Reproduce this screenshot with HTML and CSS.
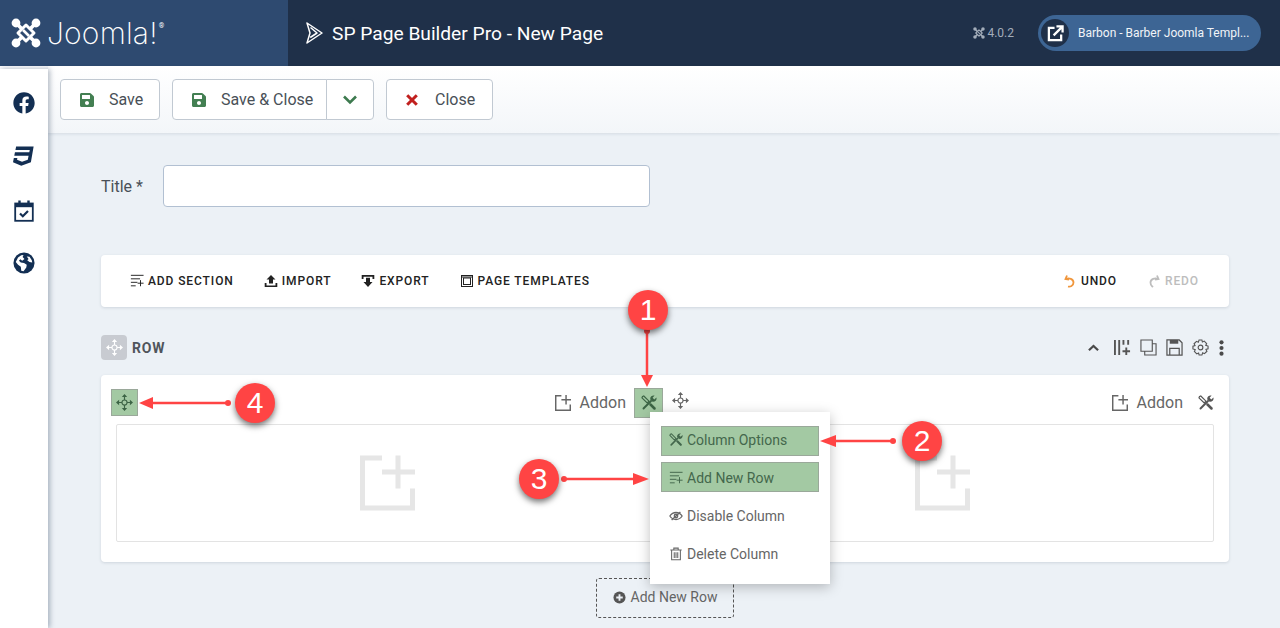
FILE: index.html
```html
<!DOCTYPE html>
<html lang="en">
<head>
<meta charset="utf-8">
<title>SP Page Builder Pro - New Page</title>
<link rel="stylesheet" href="styles.css">
</head>
<body>
<svg class="defs" width="0" height="0" aria-hidden="true">
  <symbol id="i-save" viewBox="0 0 448 512"><path fill="currentColor" d="M433.941 129.941l-83.882-83.882A48 48 0 0 0 316.118 32H48C21.49 32 0 53.49 0 80v352c0 26.51 21.49 48 48 48h352c26.51 0 48-21.49 48-48V163.882a48 48 0 0 0-14.059-33.941zM224 416c-35.346 0-64-28.654-64-64 0-35.346 28.654-64 64-64s64 28.654 64 64c0 35.346-28.654 64-64 64zm96-304.52V212c0 6.627-5.373 12-12 12H76c-6.627 0-12-5.373-12-12V108c0-6.627 5.373-12 12-12h228.52c3.183 0 6.235 1.264 8.485 3.515l3.48 3.48A11.996 11.996 0 0 1 320 111.48z"/></symbol>
  <symbol id="i-addon" viewBox="0 0 55 55"><path fill="none" stroke="currentColor" stroke-width="5" d="M22 2.500H2.500V52.500H52.500V33M38 0V33M22 16.500H55"/></symbol>
  <symbol id="i-tools" viewBox="0 0 16 16"><g fill="none" stroke="currentColor"><path stroke-width="1.900" stroke-linecap="round" d="M2.500 13.500 10 6"/><path stroke-width="1.200" d="M1.500 1.500 2.800 1 8 6.200 6.200 8 1 2.800Z"/><path stroke-width="2.500" stroke-linecap="round" d="M9.500 9.500 13.500 13.500"/></g><path fill="currentColor" d="M9.300 4.500A3.400 3.400 0 0 1 13.600 .6L11.600 2.700 13.300 4.400 15.400 2.400A3.400 3.400 0 0 1 11.500 6.700Z"/></symbol>
  <symbol id="i-move" viewBox="0 0 18 18"><g fill="none" stroke="currentColor" stroke-width="1.200"><circle cx="9" cy="9" r="2.700"/><path d="M9 1.500V6.300M9 11.700V16.500M1.500 9H6.300M11.700 9H16.500"/></g><path fill="currentColor" d="M9 0 11.800 3.300H6.200ZM9 18 11.800 14.700H6.200ZM0 9 3.300 6.200V11.800ZM18 9 14.700 6.200V11.800Z"/></symbol>
  <symbol id="i-rows" viewBox="0 0 16 16"><path fill="none" stroke="currentColor" stroke-width="1.100" d="M1 1.500H15.500M1 5.500H11.500M1 9.500H8.500M1 13.500H6.500M12 7V14M8.700 10.500H15.500"/></symbol>
  <symbol id="i-eye" viewBox="0 0 16 16"><g fill="none" stroke="currentColor"><path stroke-width="1.500" d="M1 8C3 5 5.500 4 8 4S13 5 15 8C13 11 10.500 12 8 12S3 11 1 8Z"/><circle cx="8" cy="8" r="2" stroke-width="1.500"/><path stroke-width="1.500" d="M3 12.500 13 3.500"/></g></symbol>
  <symbol id="i-trash" viewBox="0 0 16 16"><g fill="none" stroke="currentColor" stroke-width="1.200"><path d="M1.500 3.500H14.500M5.500 3.500V1.300H10.500V3.500M3 3.500V14.500H13V3.500M6 6V12.500M8 6V12.500M10 6V12.500"/></g></symbol>
  <symbol id="i-knot" viewBox="0 0 30 30"><g fill="none" stroke="currentColor" stroke-linejoin="round"><path stroke-width="3.600" d="M5 5 11 11M25 5 19 11M5 25 11 19M25 25 19 19"/><path stroke-width="3" d="M15 7 23 15 15 23 7 15Z"/><path stroke-width="2.600" d="M12 12 18 18"/></g><g fill="currentColor"><circle cx="5" cy="5" r="4.400"/><circle cx="25" cy="5" r="4.400"/><circle cx="5" cy="25" r="4.400"/><circle cx="25" cy="25" r="4.400"/></g></symbol>
</svg>

<div class="app">
  <header class="topbar">
    <div class="brand">
      <svg class="brand-knot"><use href="#i-knot"/></svg>
      <span class="brand-name">Joomla!</span><span class="brand-reg">®</span>
    </div>
    <div class="title-bar">
      <svg class="sp-logo" viewBox="0 0 20 24"><path fill="none" stroke="currentColor" stroke-width="1.500" stroke-linejoin="round" d="M3 2 18 12 3 22 6 12ZM6.500 6.500 13 12 6.200 16.500"/></svg>
      <h1 class="page-title">SP Page Builder Pro - New Page</h1>
    </div>
    <div class="version">
      <svg class="version-knot"><use href="#i-knot"/></svg>
      <span>4.0.2</span>
    </div>
    <a class="site-pill">
      <span class="site-icon">
        <svg viewBox="0 0 18 18"><path fill="none" stroke="currentColor" stroke-width="2.400" d="M8 3H2V16H15V10M7 11 16 2M10 1.500H16.500V8"/></svg>
      </span>
      <span class="site-name">Barbon - Barber Joomla Templ...</span>
    </a>
  </header>

  <div class="workspace">
    <aside class="sidebar">
      <svg class="side-icon" viewBox="0 0 512 512"><path fill="currentColor" d="M504 256C504 119 393 8 256 8S8 119 8 256c0 123.780 90.690 226.380 209.250 245V327.690h-63V256h63v-54.640c0-62.150 37-96.480 93.670-96.480 27.140 0 55.520 4.840 55.520 4.840v61h-31.280c-30.800 0-40.410 19.120-40.410 38.730V256h68.780l-11 71.690h-57.780V501C413.310 482.380 504 379.780 504 256z"/></svg>
      <svg class="side-icon" viewBox="0 0 512 512"><path fill="currentColor" d="M480 32l-64 368-223.300 80L0 400l19.600-94.800h82l-8 40.600L210 390.200l134.100-44.400 18.800-97.100H29.500l16-82h333.700l10.500-52.700H56.300l16.300-82H480z"/></svg>
      <svg class="side-icon" viewBox="0 0 20 22"><g fill="none" stroke="currentColor"><rect x="1.200" y="3.500" width="17.600" height="17.300" stroke-width="1.800"/><path stroke-width="3.400" d="M1 5.500H19"/><path stroke-width="2.400" d="M5.500 0.500V4M14.500 0.500V4"/><path stroke-width="2.200" d="M6 13.500 8.800 16.200 14 11"/></g></svg>
      <svg class="side-icon" viewBox="0 0 24 24"><circle cx="12" cy="12" r="11.500" fill="currentColor"/><path fill="#fff" d="M3 11 5.500 6 9 3.500 11.500 3.200 10.500 5.500 12.500 7.500 10 9.500 8 8 6.500 9.500 8.500 11.500 12 12 15 14 14.500 17 11.500 21 9 20.500 8.500 16 5.500 14ZM15 5 18 5.200 20.500 9 21 11.500 18 11 15.500 9 17 7.500Z"/></svg>
    </aside>

    <main class="main">
      <div class="toolbar">
        <button class="btn btn-save"><svg class="btn-icon save"><use href="#i-save"/></svg>Save</button>
        <div class="btn-group">
          <button class="btn btn-main"><svg class="btn-icon save"><use href="#i-save"/></svg>Save &amp; Close</button>
          <button class="btn btn-caret"><svg viewBox="0 0 14 10"><path fill="none" stroke="currentColor" stroke-width="2.600" d="M1 1.500 7 7.500 13 1.500"/></svg></button>
        </div>
        <button class="btn btn-close"><svg class="btn-x" viewBox="0 0 12 12"><path fill="none" stroke="currentColor" stroke-width="3" d="M1.200 1.200 10.800 10.800M10.800 1.200 1.200 10.800"/></svg>Close</button>
      </div>

      <div class="content">
        <div class="title-field">
          <label class="field-label" for="title">Title *</label>
          <input class="field-input" id="title" type="text">
        </div>

        <nav class="builder-bar">
          <a class="bar-item"><svg class="bar-icon"><use href="#i-rows"/></svg>ADD SECTION</a>
          <a class="bar-item"><svg class="bar-icon" viewBox="0 0 14 14"><path fill="currentColor" d="M7 1 11.500 5.500H9V9.500H5V5.500H2.500ZM.7 9H2.500V11.500H11.500V9H13.300V13H.7Z"/></svg>IMPORT</a>
          <a class="bar-item"><svg class="bar-icon" viewBox="0 0 14 14"><path fill="currentColor" d="M.7 1H13.300V5H11.500V2.700H2.500V5H.7ZM5 3.700H9V8H11.500L7 13 2.500 8H5Z"/></svg>EXPORT</a>
          <a class="bar-item"><svg class="bar-icon" viewBox="0 0 14 14"><g fill="none" stroke="currentColor" stroke-width="1"><rect x="1.500" y="1.500" width="11" height="11"/><rect x="3.500" y="4" width="7" height="6.500"/></g><path stroke="currentColor" d="M2 3H12"/></svg>PAGE TEMPLATES</a>
          <span class="bar-spacer"></span>
          <a class="bar-item"><svg class="bar-icon undo" viewBox="0 0 12 14"><path fill="none" stroke="currentColor" stroke-width="1.800" d="M3 1.500 1.500 5 5 5.500M2 5C5 3.500 9.500 5 9.500 8.500S6 13 4 12.500"/></svg>UNDO</a>
          <a class="bar-item redo"><svg class="bar-icon" viewBox="0 0 12 14"><path fill="none" stroke="currentColor" stroke-width="1.800" d="M9 1.500 10.500 5 7 5.500M10 5C7 3.500 2.500 5 2.500 8.500S4 12 5 13"/></svg>REDO</a>
        </nav>

        <div class="row-head">
          <span class="row-handle"><svg><use href="#i-move"/></svg></span>
          <span class="row-label">ROW</span>
          <span class="row-actions">
            <svg class="row-chevron" viewBox="0 0 12 8"><path fill="none" stroke="currentColor" stroke-width="2.400" d="M1 6.500 6 1.800 11 6.500"/></svg>
            <svg class="row-action" viewBox="0 0 18 18"><path fill="none" stroke="currentColor" stroke-width="2" d="M1 1V17M5.500 1V17M10 1V6M15 1V6M13 9V17M9 13H17"/></svg>
            <svg class="row-action" viewBox="0 0 18 18"><path fill="none" stroke="currentColor" stroke-width="1.200" d="M1 1H13V13H1ZM13 5H17V17H5V13"/></svg>
            <svg class="row-action" viewBox="0 0 18 18"><path fill="none" stroke="currentColor" stroke-width="1.300" d="M1 1H14L17 4V17H1ZM4 17V10H14V17"/><path fill="currentColor" d="M4 1H13V5H4Z"/></svg>
            <svg class="row-action" viewBox="0 0 18 18"><g fill="none" stroke="currentColor" stroke-width="1.200"><circle cx="9" cy="9" r="2.500"/><path d="M7.500 1H10.500L11 3.200 13 2.200 15.500 4.800 14.600 6.700 17 7.500V10.500L14.800 11 15.800 13 13.200 15.500 11.300 14.600 10.500 17H7.500L7 14.800 5 15.800 2.500 13.200 3.400 11.300 1 10.500V7.500L3.200 7 2.200 5 4.800 2.500 6.700 3.400Z"/></g></svg>
            <svg class="row-dots" viewBox="0 0 5 17"><g fill="currentColor"><circle cx="2.500" cy="2.500" r="2.200"/><circle cx="2.500" cy="8.500" r="2.200"/><circle cx="2.500" cy="14.500" r="2.200"/></g></svg>
          </span>
        </div>

        <section class="row-card">
          <div class="col-heads">
            <div class="col-head">
              <span class="col-move hl"><svg><use href="#i-move"/></svg></span>
              <span class="addon"><svg><use href="#i-addon"/></svg>Addon</span>
              <span class="col-tools hl"><svg><use href="#i-tools"/></svg></span>
            </div>
            <div class="col-head col-head-2">
              <span class="col-move-plain"><svg><use href="#i-move"/></svg></span>
              <span class="addon"><svg><use href="#i-addon"/></svg>Addon</span>
              <span class="col-tools-plain"><svg><use href="#i-tools"/></svg></span>
            </div>
          </div>
          <div class="col-box">
            <div class="col-slot"><svg class="big-addon"><use href="#i-addon"/></svg></div>
            <div class="col-slot"><svg class="big-addon"><use href="#i-addon"/></svg></div>
          </div>
          <ul class="col-menu">
            <li class="menu-item hl first"><svg><use href="#i-tools"/></svg>Column Options</li>
            <li class="menu-item hl second"><svg><use href="#i-rows"/></svg>Add New Row</li>
            <li class="menu-item third"><svg><use href="#i-eye"/></svg>Disable Column</li>
            <li class="menu-item fourth"><svg class="trash"><use href="#i-trash"/></svg>Delete Column</li>
          </ul>
        </section>

        <div class="add-row-wrap">
          <a class="add-row">
            <svg viewBox="0 0 14 14"><circle cx="7" cy="7" r="6.500" fill="currentColor"/><path stroke="#ebf0f5" stroke-width="2" d="M3.500 7H10.500M7 3.500V10.500"/></svg>
            Add New Row
          </a>
        </div>
      </div>
    </main>
  </div>

  <svg class="arrows" viewBox="0 0 1280 628" aria-hidden="true">
    <g fill="none" stroke="#ff4444" stroke-width="2.500">
      <path d="M647 332V376"/>
      <path d="M893 441H832"/>
      <path d="M564 479H636"/>
      <path d="M228 403H150"/>
    </g>
    <g fill="#ff4444">
      <circle cx="647" cy="331" r="3"/><path d="M641 375H653L647 387Z"/>
      <circle cx="893" cy="441" r="3"/><path d="M836 435V447L820 441Z"/>
      <circle cx="564" cy="479" r="3"/><path d="M633 473V485L649 479Z"/>
      <circle cx="228" cy="403" r="3"/><path d="M153 397V409L139 403Z"/>
    </g>
  </svg>
  <span class="callout c1">1</span>
  <span class="callout c2">2</span>
  <span class="callout c3">3</span>
  <span class="callout c4">4</span>
</div>
</body>
</html>
```

FILE: styles.css
```css
* { box-sizing: border-box; }

html, body {
  margin: 0;
  height: 100%;
  overflow: hidden;
}

body {
  font-family: Roboto, "Liberation Sans", sans-serif;
  color: #495057;
  background: #f8f9fb;
}

.defs { position: absolute; }

.app {
  position: relative;
  display: flex;
  flex-direction: column;
  width: 1280px;
  height: 628px;
  overflow: hidden;
}

/* Top bar */
.topbar {
  display: flex;
  align-items: center;
  flex: 0 0 66px;
  background: #1f3049;
  color: #fff;
}

.brand {
  display: flex;
  align-items: center;
  flex: 0 0 288px;
  height: 100%;
  padding-left: 11px;
  background: #2e4a70;
}

.brand-knot {
  width: 30px;
  height: 30px;
  color: #fff;
}

.brand-name {
  margin-left: 6px;
  font-family: Inter, sans-serif;
  font-size: 30px;
  font-weight: 200;
  letter-spacing: .2px;
  line-height: 1;
}

.brand-reg {
  align-self: flex-start;
  margin-top: 22px;
  margin-left: 1px;
  font-size: 7px;
}

.title-bar {
  display: flex;
  align-items: center;
  flex: 1;
  padding-left: 16px;
}

.sp-logo {
  width: 20px;
  height: 24px;
}

.page-title {
  margin: 0 0 0 8px;
  font-size: 19.2px;
  font-weight: 400;
}

.version {
  display: flex;
  align-items: center;
  gap: 2px;
  margin-right: 24px;
  font-size: 12px;
  color: #a3adba;
}

.version-knot {
  width: 12px;
  height: 12px;
}

.site-pill {
  display: flex;
  align-items: center;
  width: 223px;
  height: 36px;
  margin-right: 19px;
  padding-left: 3px;
  border-radius: 18px;
  background: #3d6594;
}

.site-icon {
  display: flex;
  align-items: center;
  justify-content: center;
  width: 28px;
  height: 28px;
  border-radius: 50%;
  background: #1f3049;
}

.site-icon svg {
  width: 17px;
  height: 17px;
}

.site-name {
  margin-left: 9px;
  font-size: 12px;
  color: #f1f4f8;
}

/* Workspace */
.workspace {
  display: flex;
  flex: 1;
  min-height: 0;
}

.sidebar {
  display: flex;
  flex-direction: column;
  align-items: center;
  flex: 0 0 48px;
  margin-top: 3px;
  padding-top: 23px;
  background: #fff;
  box-shadow: 2px 0 5px rgba(40, 60, 90, .35);
  position: relative;
  z-index: 1;
  color: #132f53;
}

.side-icon {
  flex: none;
  width: 22px;
  height: 22px;
  margin-bottom: 31px;
}

.side-icon:nth-child(2) { margin-bottom: 33px; }
.side-icon:nth-child(3) { margin-bottom: 30px; }

.main {
  flex: 1;
  min-width: 0;
  background: #ecf1f6;
}

/* Action toolbar */
.toolbar {
  display: flex;
  align-items: flex-start;
  gap: 12px;
  height: 67px;
  padding: 13px 12px;
  background: linear-gradient(#fff, #f3f6f9);
  box-shadow: 0 1px 3px rgba(40, 60, 90, .12);
}

.btn {
  display: flex;
  align-items: center;
  height: 41px;
  padding: 0;
  border: 1px solid #c1c9d2;
  border-radius: 4px;
  background: #fff;
  font: 400 16px Roboto, sans-serif;
  color: #495057;
}

.btn-save { width: 100px; padding-left: 19px; }
.btn-close { width: 107px; padding-left: 19px; }

.btn-group { display: flex; }

.btn-main {
  width: 155px;
  padding-left: 19px;
  border-radius: 4px 0 0 4px;
}

.btn-caret {
  justify-content: center;
  width: 48px;
  margin-left: -1px;
  border-radius: 0 4px 4px 0;
  color: #3d7a4f;
}

.btn-caret svg {
  width: 14px;
  height: 10px;
}

.btn-icon {
  width: 14px;
  height: 16px;
  margin-right: 15px;
}

.save { color: #437f52; }

.btn-x {
  width: 12px;
  height: 12px;
  margin-right: 17px;
  color: #c1201e;
}

/* Content */
.content {
  padding: 32px 51px 0 53px;
}

.title-field {
  display: flex;
  align-items: center;
}

.field-label {
  width: 62px;
  font-size: 16px;
}

.field-input {
  width: 487px;
  height: 42px;
  border: 1px solid #b2c0d2;
  border-radius: 4px;
  background: #fff;
}

.builder-bar {
  display: flex;
  align-items: center;
  gap: 30px;
  height: 52px;
  margin-top: 48px;
  padding: 0 30px 0 29px;
  border-radius: 4px;
  background: #fff;
  box-shadow: 0 1px 3px rgba(40, 60, 90, .15);
}

.bar-item {
  display: flex;
  align-items: center;
  gap: 4px;
  font-size: 12px;
  font-weight: 500;
  letter-spacing: .9px;
  color: #222;
}

.bar-icon {
  width: 14px;
  height: 14px;
}

.bar-spacer { flex: 1; }

.undo { color: #f0963c; }

.redo { color: #bdbdbd; }

/* Row head */
.row-head {
  display: flex;
  align-items: center;
  height: 25px;
  margin-top: 28px;
}

.row-handle {
  display: flex;
  align-items: center;
  justify-content: center;
  width: 26px;
  height: 25px;
  border-radius: 4px;
  background: #c8cbd1;
  color: #fff;
}

.row-handle svg,
.col-move svg,
.col-move-plain svg {
  width: 17px;
  height: 17px;
}

.row-label {
  margin-left: 5px;
  font-size: 14px;
  font-weight: 700;
  letter-spacing: .8px;
  color: #50555c;
}

.row-actions {
  display: flex;
  align-items: center;
  gap: 9px;
  margin-left: auto;
  margin-right: 5px;
  color: #555;
}

.row-chevron {
  width: 11px;
  height: 8px;
  margin-right: 6px;
  color: #4a4a4a;
}

.row-action {
  width: 17px;
  height: 17px;
}

.row-dots {
  width: 5px;
  height: 16px;
  margin-left: 1px;
  color: #4a4a4a;
}

/* Row card */
.row-card {
  position: relative;
  height: 187px;
  margin-top: 15px;
  padding: 14px 15px 0 10px;
  border-radius: 4px;
  background: #fff;
  box-shadow: 0 1px 3px rgba(40, 60, 90, .15);
}

.col-heads {
  display: flex;
  height: 27px;
}

.col-head {
  display: flex;
  align-items: center;
  flex: 0 0 552px;
  color: #666;
}

.col-head-2 {
  flex: 1;
  padding-left: 9px;
}

.hl {
  border: 1px solid #9aa89a;
  background: #a3c9a3;
  color: #3c6445;
}

.col-move {
  display: flex;
  align-items: center;
  justify-content: center;
  width: 27px;
  height: 27px;
}

.col-tools {
  display: flex;
  align-items: center;
  justify-content: center;
  flex: none;
  width: 29px;
  height: 30px;
  margin-left: 8px;
}

.col-tools svg,
.col-tools-plain svg {
  width: 16px;
  height: 16px;
}

.col-tools-plain {
  display: flex;
  margin-left: 15px;
  color: #555;
}

.addon {
  display: flex;
  align-items: center;
  margin-left: auto;
  font-size: 16px;
  color: #666;
}

.addon svg {
  width: 16px;
  height: 16px;
  margin-right: 9px;
}

.col-box {
  display: flex;
  gap: 14px;
  height: 118px;
  margin: 8px 0 0 5px;
  border: 1px solid #e3e3e3;
  border-radius: 2px;
}

.col-slot {
  display: flex;
  align-items: center;
  justify-content: center;
  flex: 1;
  color: #e6e6e6;
}

.big-addon {
  width: 55px;
  height: 56px;
}

/* Column menu */
.col-menu {
  position: absolute;
  left: 549px;
  top: 37px;
  width: 180px;
  height: 172px;
  margin: 0;
  padding: 14px 11px 0;
  list-style: none;
  background: #fff;
  box-shadow: 0 3px 12px rgba(0, 0, 0, .25);
  z-index: 2;
}

.menu-item {
  display: flex;
  align-items: center;
  height: 30px;
  padding-left: 8px;
  font-size: 14px;
  color: #666;
}

.menu-item.hl {
  padding-left: 7px;
  color: #43674c;
}

.menu-item svg {
  flex: none;
  width: 14px;
  height: 14px;
  margin-right: 4px;
}

.menu-item .trash {
  height: 16px;
}

.first { padding-bottom: 2px; }

.second {
  margin-top: 6px;
  padding-top: 2px;
}

.third { margin-top: 9px; }

.fourth { margin-top: 8px; }

/* Add new row */
.add-row-wrap {
  display: flex;
  justify-content: center;
  margin-top: 16px;
}

.add-row {
  display: flex;
  align-items: center;
  justify-content: center;
  gap: 5px;
  width: 138px;
  height: 40px;
  padding-bottom: 2px;
  border: 1px dashed #555;
  border-radius: 3px;
  font-size: 14px;
  color: #666;
}

.add-row svg {
  width: 13px;
  height: 13px;
  color: #555;
}

/* Annotations */
.arrows {
  position: absolute;
  inset: 0;
  width: 1280px;
  height: 628px;
  z-index: 3;
}

.callout {
  position: absolute;
  display: flex;
  align-items: center;
  justify-content: center;
  width: 40px;
  height: 40px;
  border-radius: 50%;
  background: #ff4444;
  box-shadow: 0 3px 6px rgba(0, 0, 0, .55);
  color: #fff;
  font: 400 30px "Liberation Sans", Arial, sans-serif;
  z-index: 4;
}

.c1 { left: 628px; top: 290px; }
.c2 { left: 902px; top: 421px; }
.c3 { left: 519px; top: 459px; }
.c4 { left: 235px; top: 383px; }
```
